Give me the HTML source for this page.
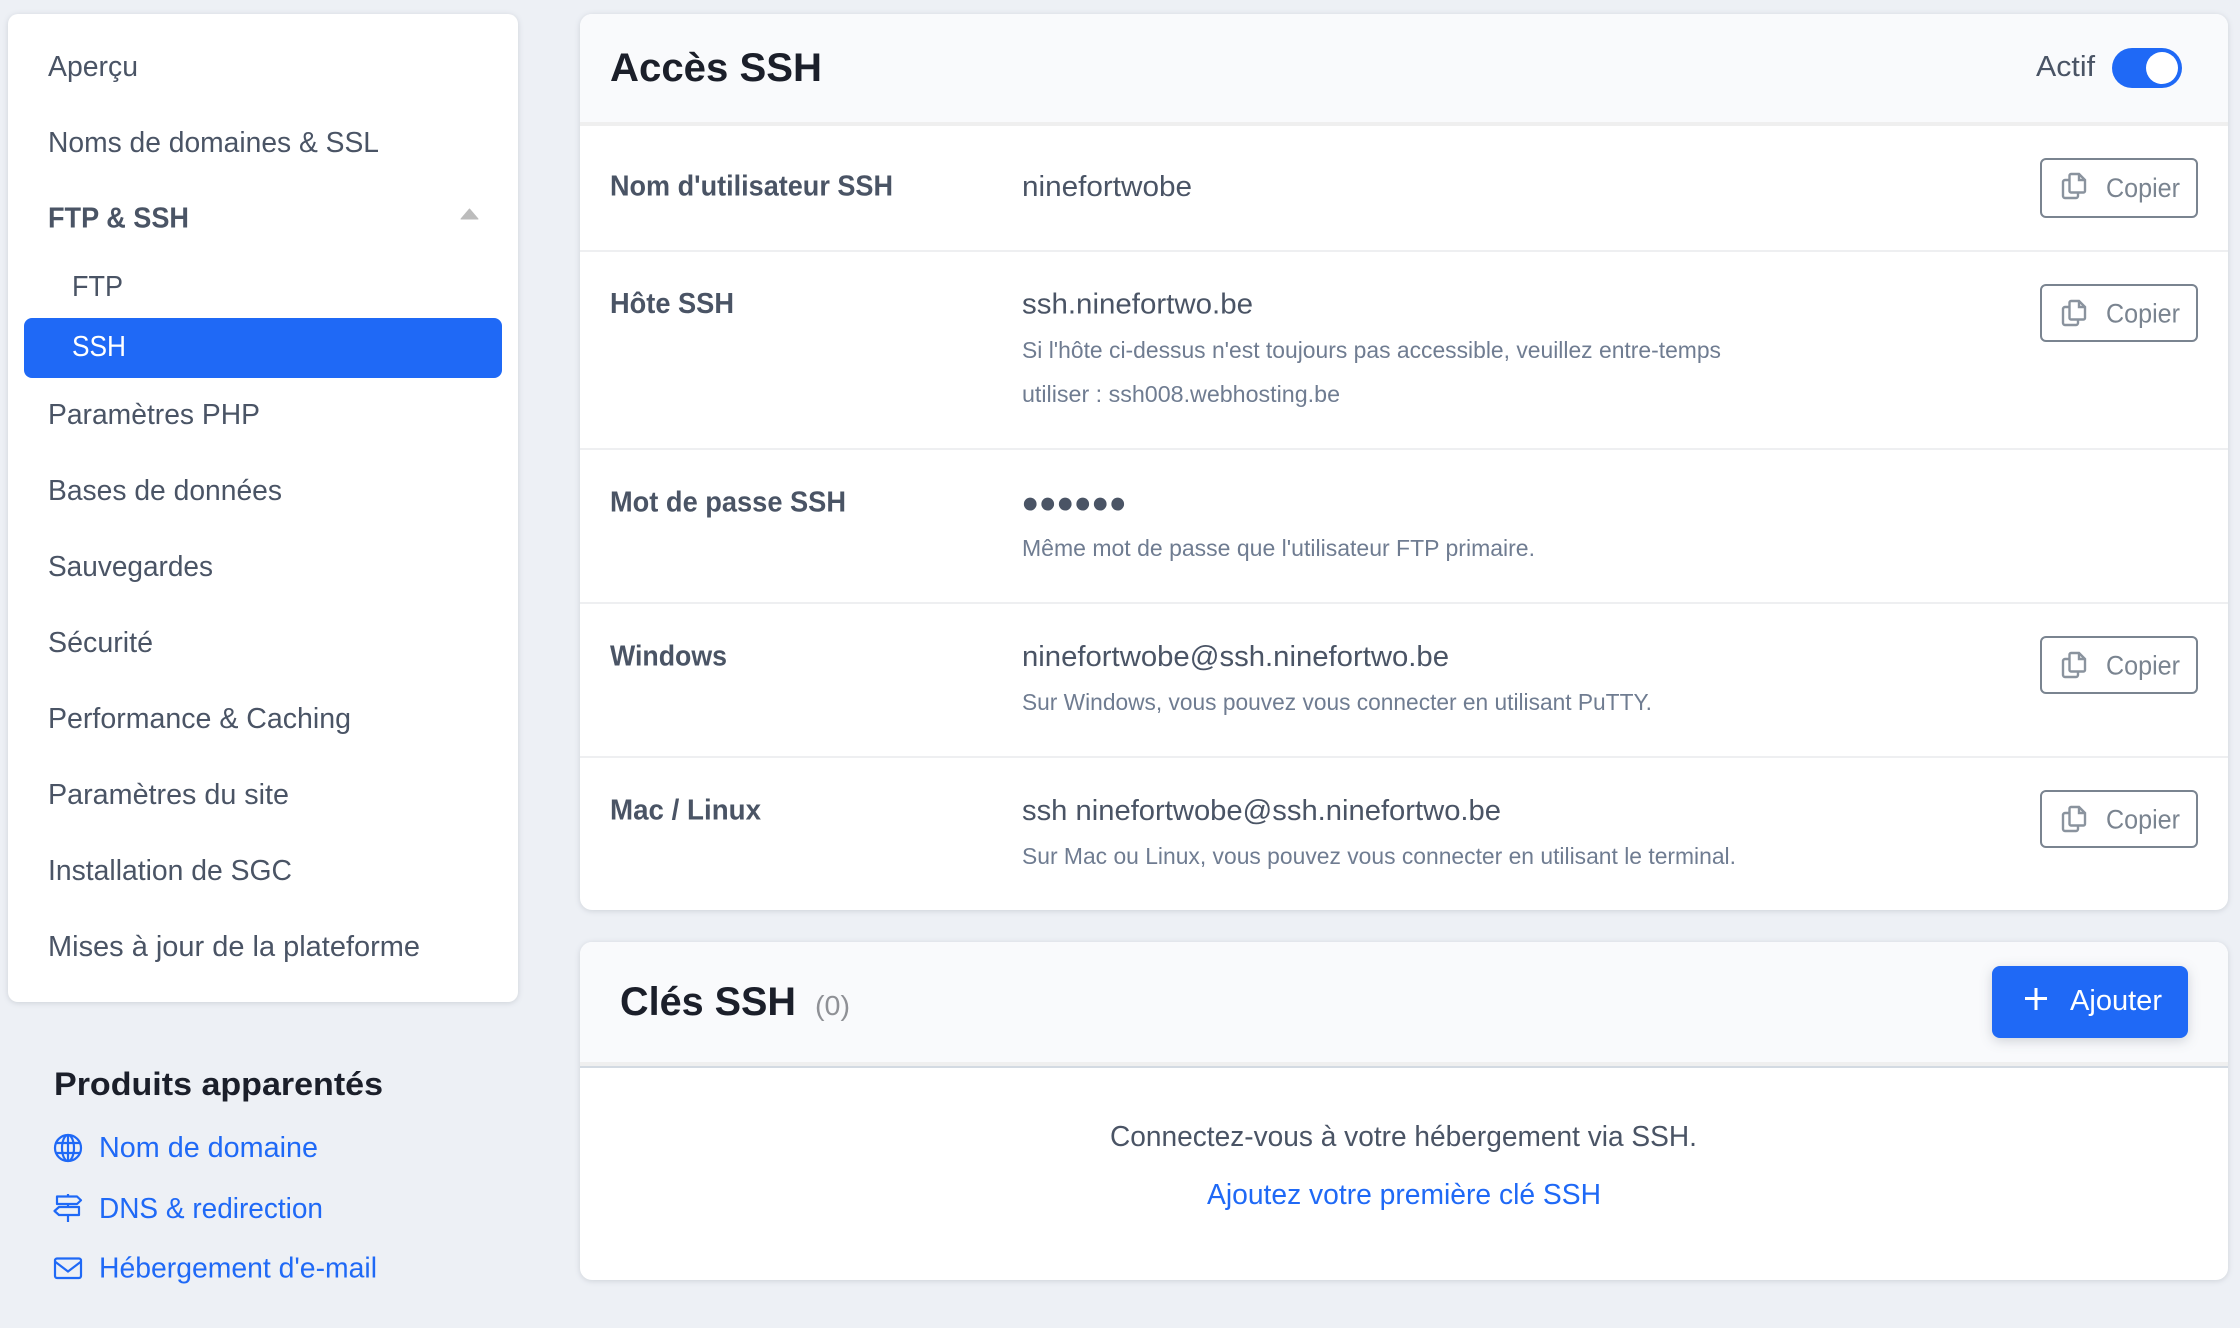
<!DOCTYPE html>
<html lang="fr">
<head>
<meta charset="utf-8">
<title>Accès SSH</title>
<style>
html,body{margin:0;padding:0;background:#edf0f5;width:2240px;height:1328px;overflow:hidden}
svg{display:block;position:absolute;left:0;top:0}
text{font-family:"Liberation Sans",sans-serif;font-size:29px;fill:#4a5465}
.b{font-weight:700}
.s{font-size:23.5px;fill:#6f7c91}
.t{font-weight:700;font-size:40px;fill:#1b1f2a}
.l{fill:#1f69f6}
.c{fill:#7a8490;font-size:27px}
.card{filter:drop-shadow(0 1px 3px rgba(40,50,70,.16))}
</style>
</head>
<body>
<svg width="2240" height="1328" viewBox="0 0 2240 1328" xmlns="http://www.w3.org/2000/svg">
<defs>
<g id="ic">
<path d="M2069 6h-4a2 2 0 0 0-2 2v14a2 2 0 0 0 2 2h11a2 2 0 0 0 2-2v-3" fill="none" stroke="#8a939e" stroke-width="2.400"/>
<path d="M2071 0h8l6 6v11a1.500 1.500 0 0 1-1.500 1.500h-12.500a1.500 1.500 0 0 1-1.500-1.500v-15.500a1.500 1.500 0 0 1 1.500-1.500zM2079 0v6h6" fill="#fff" stroke="#8a939e" stroke-width="2.400"/>
</g>
<g id="copy">
<rect x="2041" y="0" width="156" height="56" rx="5" fill="#fff" stroke="#7a8490" stroke-width="2"/>
<use href="#ic" y="16"/>
<text class="c" x="2106" y="37.500" textLength="74" lengthAdjust="spacingAndGlyphs">Copier</text>
</g>
</defs>

<!-- Sidebar -->
<rect class="card" x="8" y="14" width="510" height="988" rx="10" fill="#fff"/>
<text x="48" y="76" textLength="90" lengthAdjust="spacingAndGlyphs">Aperçu</text>
<text x="48" y="152" textLength="331" lengthAdjust="spacingAndGlyphs">Noms de domaines &amp; SSL</text>
<text class="b" x="48" y="227.500" textLength="141" lengthAdjust="spacingAndGlyphs">FTP &amp; SSH</text>
<path d="M461 219h17l-8.500-10z" fill="#bcbcbc" stroke="#bcbcbc" stroke-width="1" stroke-linejoin="round"/>
<text x="72" y="296" textLength="51" lengthAdjust="spacingAndGlyphs">FTP</text>
<rect x="24" y="318" width="478" height="60" rx="8" fill="#1f69f6"/>
<text x="72" y="356" textLength="54" lengthAdjust="spacingAndGlyphs" style="fill:#fff">SSH</text>
<text x="48" y="424" textLength="212" lengthAdjust="spacingAndGlyphs">Paramètres PHP</text>
<text x="48" y="500" textLength="234" lengthAdjust="spacingAndGlyphs">Bases de données</text>
<text x="48" y="576" textLength="165" lengthAdjust="spacingAndGlyphs">Sauvegardes</text>
<text x="48" y="652" textLength="105" lengthAdjust="spacingAndGlyphs">Sécurité</text>
<text x="48" y="728" textLength="303" lengthAdjust="spacingAndGlyphs">Performance &amp; Caching</text>
<text x="48" y="804" textLength="241" lengthAdjust="spacingAndGlyphs">Paramètres du site</text>
<text x="48" y="880" textLength="244" lengthAdjust="spacingAndGlyphs">Installation de SGC</text>
<text x="48" y="956" textLength="372" lengthAdjust="spacingAndGlyphs">Mises à jour de la plateforme</text>

<!-- Related products -->
<text class="b" x="54" y="1095" textLength="329" lengthAdjust="spacingAndGlyphs" style="font-size:32px;fill:#1b1f2a">Produits apparentés</text>
<g fill="none" stroke="#1f69f6" stroke-width="2.200">
<circle cx="68" cy="1148" r="13"/>
<ellipse cx="68" cy="1148" rx="6" ry="13"/>
<path d="M68 1135v26M56 1143h24M56 1153h24"/>
<path d="M68 1194v2.500M68 1204v3M68 1215v7"/>
<path d="M57 1196.500h20l4 3.750-4 3.750h-20zM79 1207h-20l-4.500 4 4.500 4h20z" stroke-linejoin="round"/>
<rect x="55" y="1258.500" width="26" height="19.500" rx="2"/>
<path d="M55.500 1262l12.500 9.500 12.500-9.500"/>
</g>
<text class="l" x="99" y="1157" textLength="219" lengthAdjust="spacingAndGlyphs">Nom de domaine</text>
<text class="l" x="99" y="1218" textLength="224" lengthAdjust="spacingAndGlyphs">DNS &amp; redirection</text>
<text class="l" x="99" y="1277.500" textLength="278" lengthAdjust="spacingAndGlyphs">Hébergement d'e-mail</text>

<!-- Card 1 -->
<rect class="card" x="580" y="14" width="1648" height="896" rx="12" fill="#fff"/>
<path d="M580 122v-96a12 12 0 0 1 12-12h1624a12 12 0 0 1 12 12v96z" fill="#f9fafc"/>
<rect x="580" y="122" width="1648" height="4" fill="#efefef"/>
<text class="t" x="610" y="81" textLength="212" lengthAdjust="spacingAndGlyphs">Accès SSH</text>
<text x="2036" y="76" textLength="59" lengthAdjust="spacingAndGlyphs">Actif</text>
<rect x="2112" y="48" width="70" height="40" rx="20" fill="#1f69f6"/>
<circle cx="2162" cy="68" r="16" fill="#fff"/>
<rect x="580" y="250" width="1648" height="2" fill="#eeeff1"/>
<rect x="580" y="448" width="1648" height="2" fill="#eeeff1"/>
<rect x="580" y="602" width="1648" height="2" fill="#eeeff1"/>
<rect x="580" y="756" width="1648" height="2" fill="#eeeff1"/>

<text class="b" x="610" y="195.500" textLength="283" lengthAdjust="spacingAndGlyphs">Nom d'utilisateur SSH</text>
<text x="1022" y="196" textLength="170" lengthAdjust="spacingAndGlyphs">ninefortwobe</text>
<rect x="2041" y="159" width="156" height="58" rx="5" fill="#fff" stroke="#7a8490" stroke-width="2"/>
<use href="#ic" y="174" transform="translate(0,0)"/>
<text class="c" x="2106" y="197" textLength="74" lengthAdjust="spacingAndGlyphs">Copier</text>

<text class="b" x="610" y="313" textLength="124" lengthAdjust="spacingAndGlyphs">Hôte SSH</text>
<text x="1022" y="313.500" textLength="231" lengthAdjust="spacingAndGlyphs">ssh.ninefortwo.be</text>
<text class="s" x="1022" y="358" textLength="699" lengthAdjust="spacingAndGlyphs">Si l'hôte ci-dessus n'est toujours pas accessible, veuillez entre-temps</text>
<text class="s" x="1022" y="402" textLength="318" lengthAdjust="spacingAndGlyphs">utiliser : ssh008.webhosting.be</text>
<use href="#copy" y="285"/>

<text class="b" x="610" y="511.500" textLength="236" lengthAdjust="spacingAndGlyphs">Mot de passe SSH</text>
<text x="1022" y="520" textLength="104" style="font-size:47px">••••••</text>
<text class="s" x="1022" y="556" textLength="513" lengthAdjust="spacingAndGlyphs">Même mot de passe que l'utilisateur FTP primaire.</text>

<text class="b" x="610" y="665.500" textLength="117" lengthAdjust="spacingAndGlyphs">Windows</text>
<text x="1022" y="666" textLength="427" lengthAdjust="spacingAndGlyphs">ninefortwobe@ssh.ninefortwo.be</text>
<text class="s" x="1022" y="710" textLength="630" lengthAdjust="spacingAndGlyphs">Sur Windows, vous pouvez vous connecter en utilisant PuTTY.</text>
<use href="#copy" y="637"/>

<text class="b" x="610" y="819.500" textLength="151" lengthAdjust="spacingAndGlyphs">Mac / Linux</text>
<text x="1022" y="820" textLength="479" lengthAdjust="spacingAndGlyphs">ssh ninefortwobe@ssh.ninefortwo.be</text>
<text class="s" x="1022" y="864" textLength="714" lengthAdjust="spacingAndGlyphs">Sur Mac ou Linux, vous pouvez vous connecter en utilisant le terminal.</text>
<use href="#copy" y="791"/>

<!-- Card 2 -->
<rect class="card" x="580" y="942" width="1648" height="338" rx="12" fill="#fff"/>
<path d="M580 1062v-108a12 12 0 0 1 12-12h1624a12 12 0 0 1 12 12v108z" fill="#f9fafc"/>
<rect x="580" y="1062" width="1648" height="4" fill="#efefef"/>
<rect x="580" y="1066" width="1648" height="2" fill="#d3dae2"/>
<text class="t" x="620" y="1015" textLength="176" lengthAdjust="spacingAndGlyphs">Clés SSH</text>
<text x="815" y="1015" textLength="35" lengthAdjust="spacingAndGlyphs" style="fill:#8f9196;font-size:28px">(0)</text>
<rect x="1992" y="966" width="196" height="72" rx="8" fill="#1f69f6" style="filter:drop-shadow(0 3px 6px rgba(40,50,70,.2))"/>
<path d="M2036 988v22M2025 998.500h22" stroke="#fff" stroke-width="3" fill="none"/>
<text x="2070" y="1010" textLength="92" lengthAdjust="spacingAndGlyphs" style="fill:#fff">Ajouter</text>
<text x="1110" y="1146" textLength="587" lengthAdjust="spacingAndGlyphs">Connectez-vous à votre hébergement via SSH.</text>
<text class="l" x="1207" y="1204" textLength="394" lengthAdjust="spacingAndGlyphs">Ajoutez votre première clé SSH</text>
</svg>
</body>
</html>
